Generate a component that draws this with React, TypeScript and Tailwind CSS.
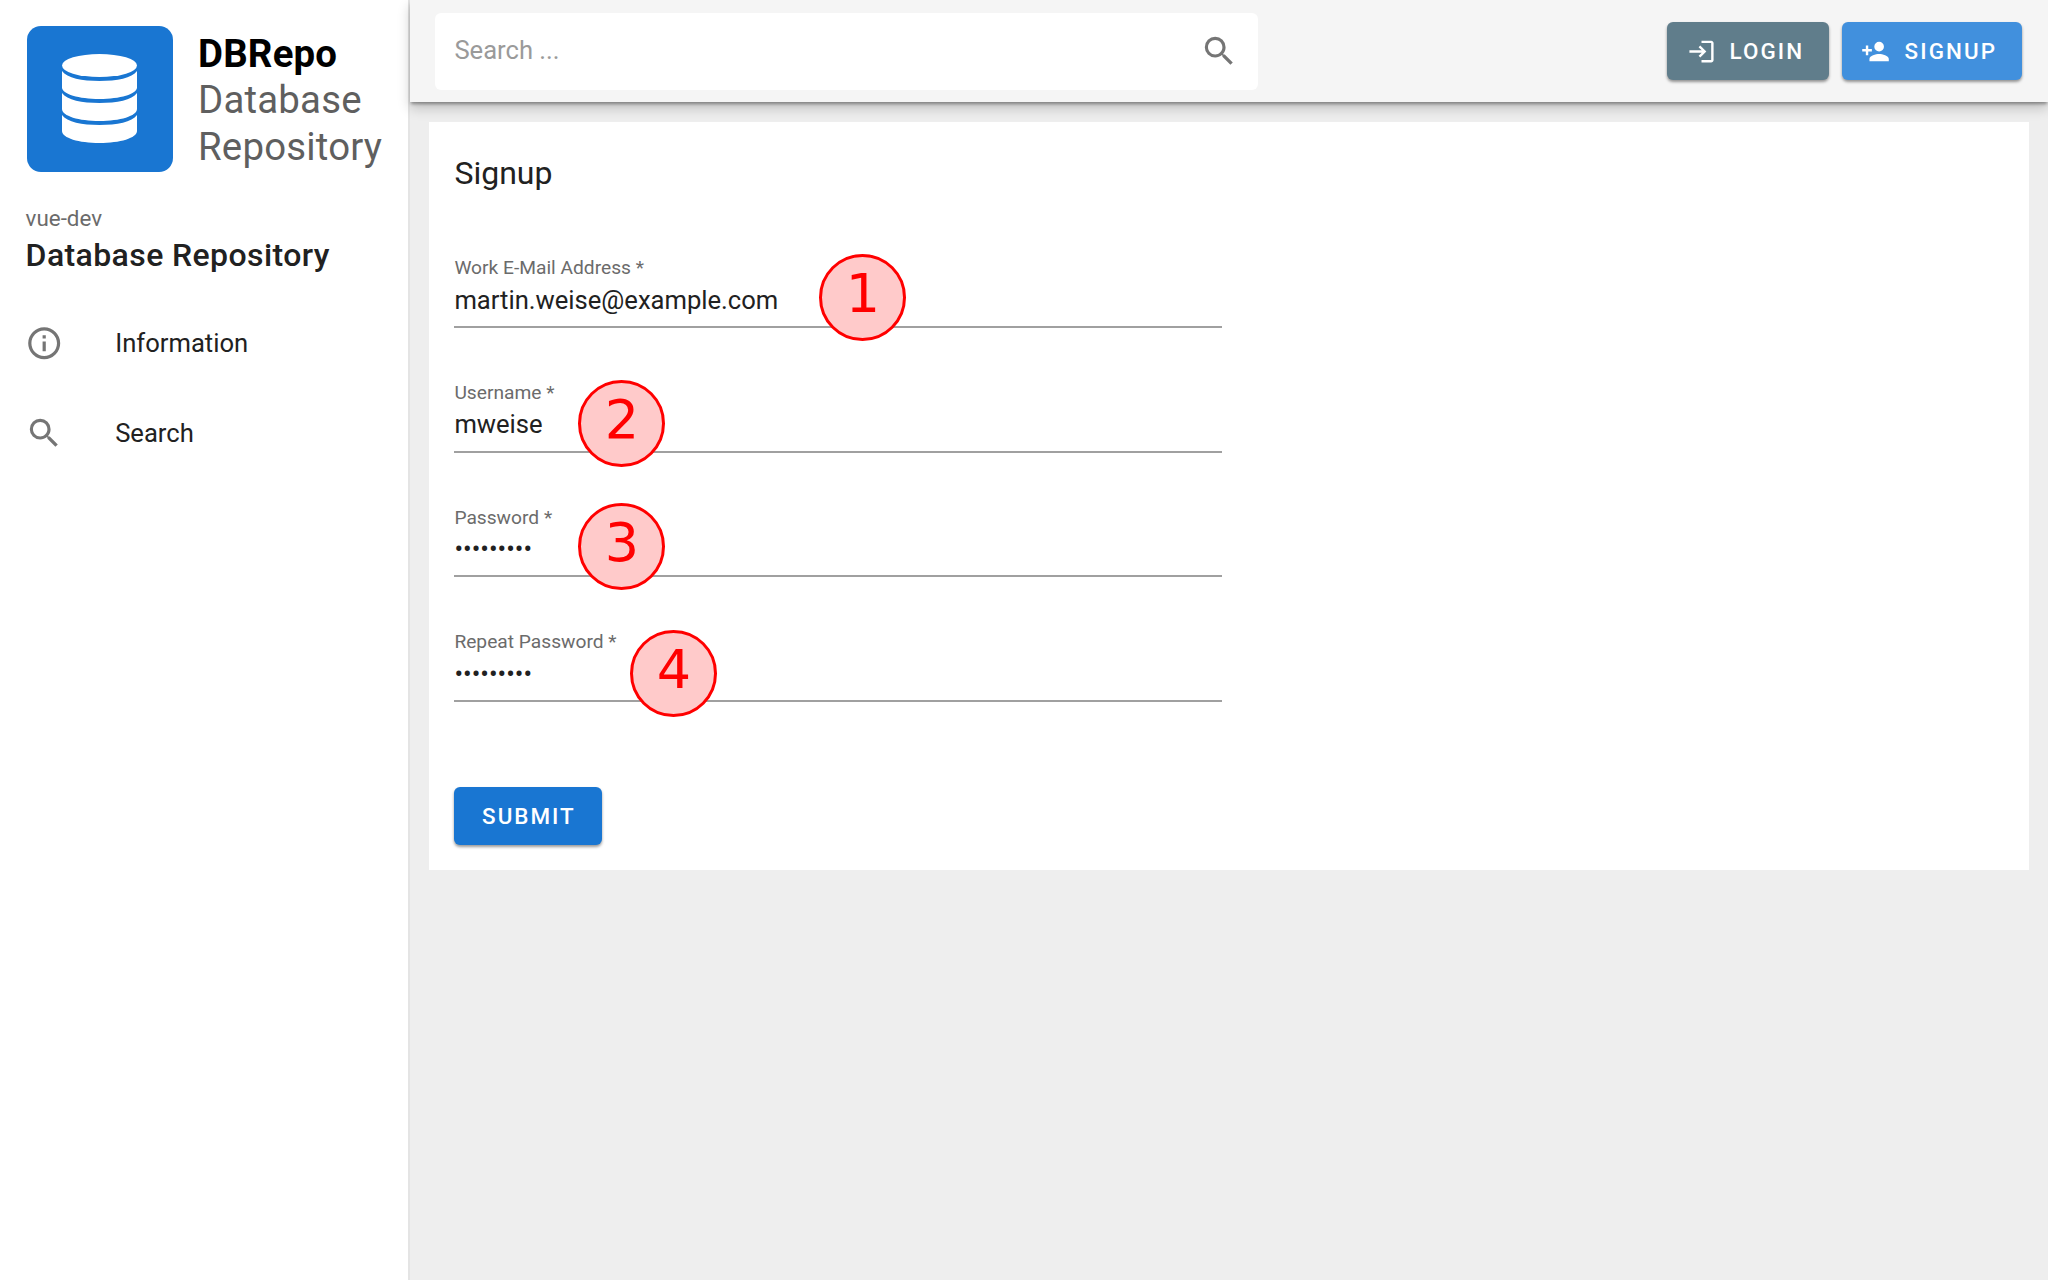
import React from 'react';

const mdi = {
  info: 'M11,9H13V7H11M12,20C7.59,20 4,16.41 4,12C4,7.59 7.59,4 12,4C16.41,4 20,7.59 20,12C20,16.41 16.41,20 12,20M12,2A10,10 0 0,0 2,12A10,10 0 0,0 12,22A10,10 0 0,0 22,12A10,10 0 0,0 12,2M11,17H13V11H11V17Z',
  magnify: 'M9.5,3A6.5,6.5 0 0,1 16,9.5C16,11.11 15.41,12.59 14.44,13.73L14.71,14H15.5L20.5,19L19,20.5L14,15.5V14.71L13.73,14.44C12.59,15.41 11.11,16 9.5,16A6.5,6.5 0 0,1 3,9.5A6.5,6.5 0 0,1 9.5,3M9.5,5C7,5 5,7 5,9.5C5,12 7,14 9.5,14C12,14 14,12 14,9.5C14,7 12,5 9.5,5Z',
  login: 'M11 7L9.6 8.4L12.2 11H2V13H12.2L9.6 15.6L11 17L16 12L11 7M20 19H12V21H20C21.1 21 22 20.1 22 19V5C22 3.9 21.1 3 20 3H12V5H20V19Z',
  accountPlus: 'M15,14C12.33,14 7,15.33 7,18V20H23V18C23,15.33 17.67,14 15,14M6,10V7H4V10H1V12H4V15H6V12H9V10M15,12A4,4 0 0,0 19,8A4,4 0 0,0 15,4A4,4 0 0,0 11,8A4,4 0 0,0 15,12Z',
};

function Icon({ d, className }: { d: string; className: string }) {
  return (
    <svg viewBox="0 0 24 24" className={className} fill="currentColor">
      <path d={d} />
    </svg>
  );
}

function Logo() {
  return (
    <div className="w-[146px] h-[146px] shrink-0 rounded-[14px] bg-[#1976d2] flex items-center justify-center">
      <svg viewBox="0 0 75 89" className="w-[75px] h-[89px] mr-[2px] mb-[2px]" fill="#ffffff">
        <ellipse cx="37.5" cy="11.5" rx="37.5" ry="11.5" />
        <path d="M0 17C5 24 20 27 37.5 27C55 27 70 24 75 17V33.500C75 40 58 45 37.500 45C17 45 0 40 0 33.500Z" />
        <path d="M0 39C5 46 20 49 37.5 49C55 49 70 46 75 39V55C75 62 58 67 37.500 67C17 67 0 62 0 55Z" />
        <path d="M0 61C5 68 20 71 37.5 71C55 71 70 68 75 61V77C75 84 58 89 37.500 89C17 89 0 84 0 77Z" />
      </svg>
    </div>
  );
}

function NavItem({ d, label }: { d: string; label: string }) {
  return (
    <div className="flex items-center h-[90px] px-[25.6px]">
      <Icon d={d} className="w-[38.4px] h-[38.4px] text-[#757575] mr-[52.2px] -ml-[1px]" />
      <span className="text-[25.6px] text-[#212121]">{label}</span>
    </div>
  );
}

function Badge({ n, className }: { n: number; className: string }) {
  return (
    <div
      className={`absolute w-[87px] h-[87px] rounded-full border-[3px] border-[#ff0000] bg-[#ffcaca] text-[#ff0000] flex items-center justify-center pb-[8px] text-[54px] font-['DejaVu_Sans',sans-serif] ${className}`}
    >
      {n}
    </div>
  );
}

function Field({
  label,
  value,
  type,
  children,
}: {
  label: string;
  value: string;
  type: string;
  children: React.ReactNode;
}) {
  return (
    <div className="relative h-[124.8px] pb-[35.2px]">
      <div className="h-[89.6px] w-[768px] border-b-[2px] border-[#a0a0a0] pt-[16.8px]">
        <label className="block text-[19.2px] leading-[25.6px] text-[#6b6b6b]">{label} *</label>
        <input
          readOnly
          type={type}
          value={value}
          className="block w-full text-[25.6px] leading-[38.4px] text-[#212121] outline-none"
        />
      </div>
      {children}
    </div>
  );
}

export default function App() {
  return (
    <div className="flex h-screen bg-[#eeeeee] font-['Roboto',sans-serif] overflow-hidden">
      {/* Sidebar */}
      <aside className="w-[409.6px] shrink-0 bg-white border-r-[2px] border-[#e4e4e4]">
        <div className="flex pt-[26px] pl-[27px]">
          <Logo />
          <div className="ml-[25px] text-[38.4px] leading-[46.8px] pt-[4.5px] tracking-[0.2px]">
            <div className="font-bold text-black">DBRepo</div>
            <div className="text-[#5f5f5f]">Database</div>
            <div className="text-[#5f5f5f]">Repository</div>
          </div>
        </div>
        <div className="pl-[25.6px] pt-[32px]">
          <div className="text-[22.4px] leading-[28px] text-[#6b6b6b]">vue-dev</div>
          <div className="text-[32px] leading-[46px] font-medium text-[#212121] tracking-[0.4px]">Database Repository</div>
        </div>
        <nav className="pt-[20px]">
          <NavItem d={mdi.info} label="Information" />
          <NavItem d={mdi.magnify} label="Search" />
        </nav>
      </aside>

      <div className="flex-1 min-w-0 flex flex-col">
        {/* Top bar */}
        <header className="relative h-[102.400px] shrink-0 bg-[#f5f5f5] shadow-[0_3px_3px_-1px_rgba(0,0,0,0.35),0_6px_12px_rgba(0,0,0,0.2)] flex items-center justify-between pl-[25.6px] pr-[25.6px]">
          <div className="w-[823px] h-[76.8px] bg-white rounded-[6px] flex items-center pl-[19.2px] pr-[20px]">
            <input
              readOnly
              placeholder="Search ..."
              className="flex-1 min-w-0 h-[36px] mb-[2px] text-[25.6px] outline-none placeholder:text-[#9a9a9a]"
            />
            <Icon d={mdi.magnify} className="w-[38.4px] h-[38.4px] text-[#757575]" />
          </div>
          <div className="flex gap-[13px]">
            <button className="h-[58px] w-[162px] pt-[2px] pr-[6px] rounded-[6px] bg-[#607d8b] text-white flex items-center justify-center text-[22.4px] font-medium tracking-[2.1px] shadow-[0_2px_3px_rgba(0,0,0,0.4)]">
              <Icon d={mdi.login} className="w-[29px] h-[29px] mr-[14px] -mt-[2px]" />
              LOGIN
            </button>
            <button className="h-[58px] w-[180px] pt-[2px] pr-[7px] rounded-[6px] bg-[#4190dd] text-white flex items-center justify-center text-[22.4px] font-medium tracking-[2.1px] shadow-[0_2px_3px_rgba(0,0,0,0.4)]">
              <Icon d={mdi.accountPlus} className="w-[29px] h-[29px] mr-[15px] -mt-[2px]" />
              SIGNUP
            </button>
          </div>
        </header>

        {/* Content */}
        <main className="flex-1 p-[19.2px]">
          <div className="bg-white px-[25.6px] pt-[25.6px] pb-[25.1px]">
            <h1 className="text-[32px] leading-[51.2px] pt-[1px] text-[#212121] mb-[38.9px]">Signup</h1>
            <Field label="Work E-Mail Address" value="martin.weise@example.com" type="text">
              <Badge n={1} className="left-[365px] top-[16px]" />
            </Field>
            <Field label="Username" value="mweise" type="text">
              <Badge n={2} className="left-[124px] top-[17px]" />
            </Field>
            <Field label="Password" value="password1" type="password">
              <Badge n={3} className="left-[124px] top-[15px]" />
            </Field>
            <Field label="Repeat Password" value="password1" type="password">
              <Badge n={4} className="left-[176px] top-[17px]" />
            </Field>
            <button className="mt-[49.1px] block h-[58px] w-[148px] pt-[2px] pl-[1px] rounded-[6px] bg-[#1976d2] text-white text-[22.4px] font-medium tracking-[2px] shadow-[0_2px_3px_rgba(0,0,0,0.4)]">
              SUBMIT
            </button>
          </div>
        </main>
      </div>
    </div>
  );
}
